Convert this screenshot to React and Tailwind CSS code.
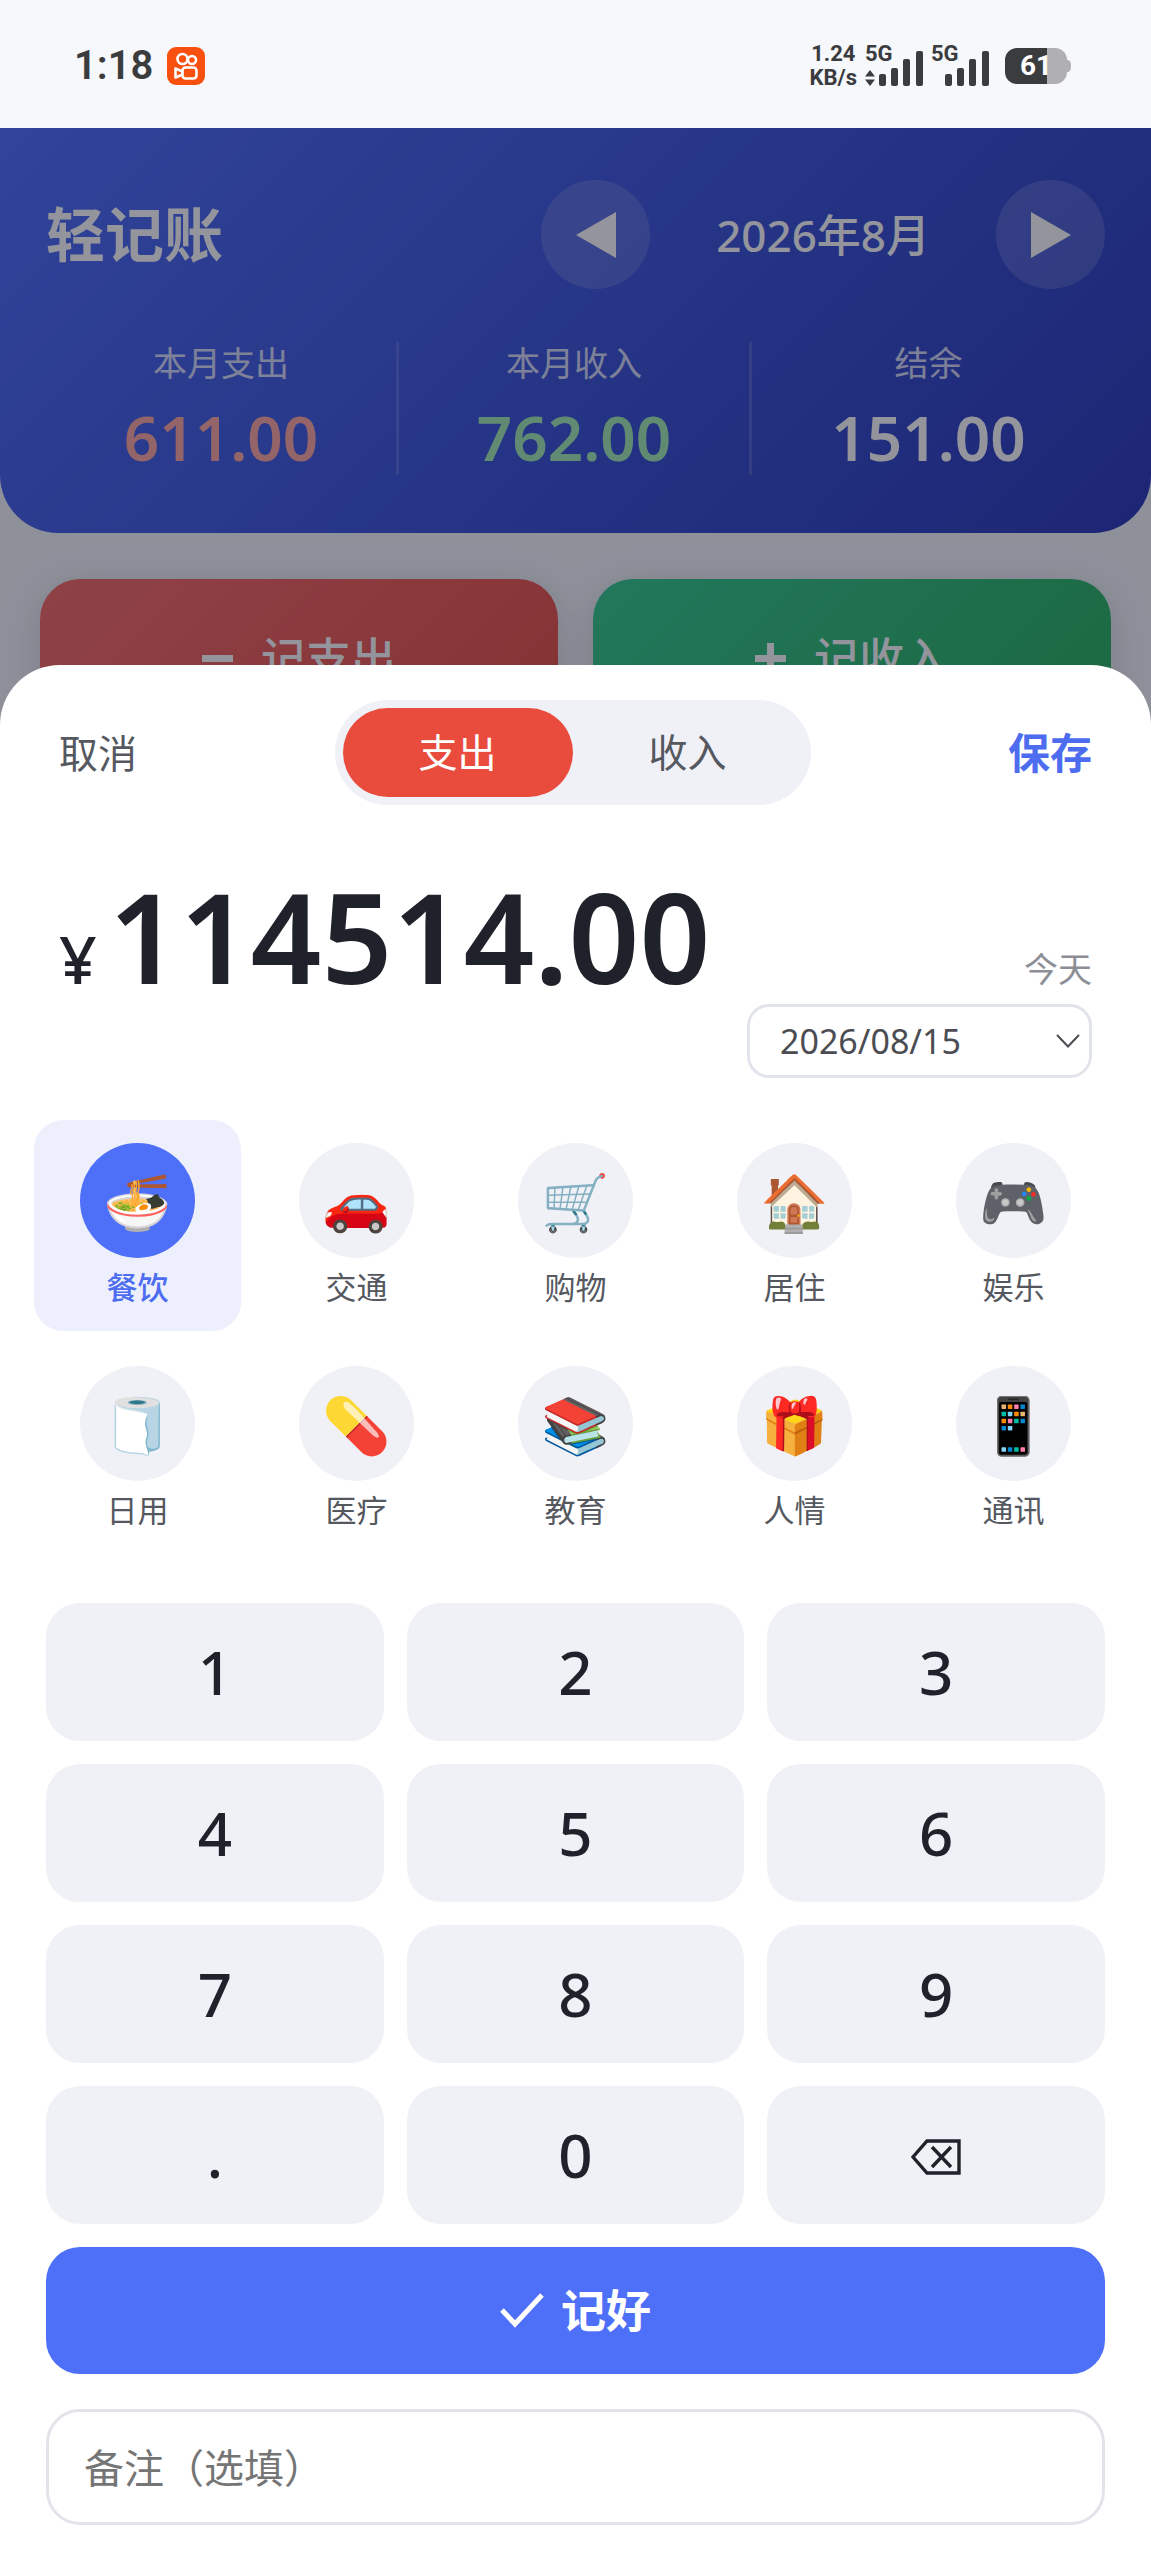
import React, { useState } from 'react';

const categories = [
  { name: '餐饮', icon: '🍜' },
  { name: '交通', icon: '🚗' },
  { name: '购物', icon: '🛒' },
  { name: '居住', icon: '🏠' },
  { name: '娱乐', icon: '🎮' },
  { name: '日用', icon: '🧻' },
  { name: '医疗', icon: '💊' },
  { name: '教育', icon: '📚' },
  { name: '人情', icon: '🎁' },
  { name: '通讯', icon: '📱' },
];

const keys = ['1', '2', '3', '4', '5', '6', '7', '8', '9', '.', '0', 'del'];

const stats = [
  { label: '本月支出', value: '611.00', color: 'text-[#ffa8a0]' },
  { label: '本月收入', value: '762.00', color: 'text-[#a4edb4]' },
  { label: '结余', value: '151.00', color: 'text-white' },
];

const SignalBars = () => (
  <svg className="h-[35px] w-[44px]" viewBox="0 0 44 35" fill="#3b3c3e">
    <rect x="0" y="23" width="7" height="12" rx="2" />
    <rect x="12" y="17" width="7" height="18" rx="2" />
    <rect x="24" y="8" width="7" height="27" rx="2" />
    <rect x="37" y="0" width="7" height="35" rx="2" />
  </svg>
);

const StatusBar = () => (
  <div className="h-32 flex items-center justify-between pl-[74px] pr-20 pt-1 font-['Roboto','Noto_Sans',sans-serif] text-[#3b3c3e]">
    <div className="flex items-center gap-[14px]">
      <span className="text-[40px] leading-none font-semibold">1:18</span>
      <svg className="w-[38px] h-[38px]" viewBox="0 0 38 38" fill="none" stroke="#fff" strokeWidth="2.6">
        <rect width="38" height="38" rx="9" fill="#f8500f" stroke="none" />
        <circle cx="15.500" cy="12" r="5" />
        <circle cx="25" cy="13" r="4" />
        <rect x="15.500" y="20.500" width="14" height="11" rx="3" />
        <path d="M15.500 24.500l-7-3v9l7-3" strokeLinejoin="round" />
      </svg>
    </div>
    <div className="flex items-center">
      <div className="flex flex-col items-center text-[22px] leading-6 font-bold mr-2">
        <span>1.24</span>
        <span>KB/s</span>
      </div>
      <div className="relative flex items-end h-10 pl-[14px] mr-[22px]">
        <span className="absolute left-0 -top-1 text-[22px] leading-6 font-bold">5G</span>
        <svg className="absolute left-0 bottom-0 w-[10px] h-4" viewBox="0 0 10 16" fill="#3b3c3e">
          <path d="M5 0l5 6.500H0zM5 16l5-6.500H0z" />
        </svg>
        <SignalBars />
      </div>
      <div className="relative flex items-end h-10 mr-4">
        <span className="absolute -left-[14px] -top-1 text-[22px] leading-6 font-bold">5G</span>
        <SignalBars />
      </div>
      <div className="relative flex items-center">
        <svg className="w-[66px] h-9" viewBox="0 0 66 36">
          <path d="M42 0h8a12 12 0 0 1 12 12c3 0 4 2 4 6s-1 6-4 6a12 12 0 0 1-12 12h-8z" fill="#b0b0b4" />
          <path d="M42 0H12A12 12 0 0 0 0 12v12a12 12 0 0 0 12 12h30z" fill="#3b3c3e" />
        </svg>
        <span className="absolute left-0 right-1 text-center text-[28px] leading-9 font-bold text-white">61</span>
      </div>
    </div>
  </div>
);

const Header = () => (
  <header className="rounded-b-[58px] bg-linear-135 from-[#4d6efb] to-[#2837b7] px-[46px] pt-[52px] pb-[58px] text-white">
    <div className="flex items-center justify-between">
      <h1 className="text-[59px] leading-none font-bold">轻记账</h1>
      <div className="flex items-center gap-[66px]">
        <button aria-label="上个月" className="w-[109px] h-[109px] rounded-full bg-white/15 flex items-center justify-center">
          <svg className="w-10 h-[46px]" viewBox="0 0 40 46" fill="currentColor">
            <path d="M40 0v46L0 23z" />
          </svg>
        </button>
        <span className="text-[44px] leading-none font-medium">2026年8月</span>
        <button aria-label="下个月" className="w-[109px] h-[109px] rounded-full bg-white/15 flex items-center justify-center">
          <svg className="w-10 h-[46px]" viewBox="0 0 40 46" fill="currentColor">
            <path d="M0 0v46l40-23z" />
          </svg>
        </button>
      </div>
    </div>
    <div className="mt-[53px] grid grid-cols-3 divide-x-3 divide-white/15">
      {stats.map((item) => (
        <div key={item.label} className="flex flex-col items-center gap-[15px]">
          <span className="text-[34px] leading-[42px] text-white/80">{item.label}</span>
          <span className={`text-[62px] leading-[76px] font-semibold ${item.color}`}>{item.value}</span>
        </div>
      ))}
    </div>
  </header>
);

const QuickActions = () => (
  <div className="grid grid-cols-2 gap-[35px] px-10 pt-[46px] text-[45px] leading-none font-medium text-white">
    <button className="h-[158px] rounded-[40px] bg-linear-135 from-[#f76b64] to-[#e84c43] shadow-[0_8px_40px_rgba(0,0,0,0.15)] flex items-center justify-center gap-7">
      <svg className="w-[31px] h-[31px]" viewBox="0 0 31 31" fill="currentColor">
        <path d="M0 12h31v7H0z" />
      </svg>
      记支出
    </button>
    <button className="h-[158px] rounded-[40px] bg-linear-135 from-[#33cb8b] to-[#25b058] shadow-[0_8px_40px_rgba(0,0,0,0.15)] flex items-center justify-center gap-7">
      <svg className="w-[31px] h-[31px]" viewBox="0 0 31 31" fill="currentColor">
        <path d="M12 0h7v12h12v7H19v12h-7V19H0v-7h12z" />
      </svg>
      记收入
    </button>
  </div>
);

const App = () => {
  const [type, setType] = useState('expense');
  const [category, setCategory] = useState('餐饮');
  const [amount, setAmount] = useState('114514.00');
  const [note, setNote] = useState('');

  const handleKey = (key) => {
    if (key === 'del') {
      setAmount(amount.slice(0, -1));
      return;
    }
    if (key === '.' && amount.includes('.')) return;
    setAmount(amount + key);
  };

  return (
    <div className="relative min-h-screen bg-[#f6f8fc] font-['Noto_Sans','Noto_Sans_CJK_SC','Noto_Color_Emoji',sans-serif]">
      <StatusBar />
      <Header />
      <QuickActions />

      {/* Overlay */}
      <div className="absolute inset-x-0 top-32 bottom-0 bg-[#0f1124]/45"></div>

      {/* Bottom sheet */}
      <div className="fixed inset-x-0 bottom-0 rounded-t-[60px] bg-white px-[46px] pt-[35px] pb-[35px] text-[#1f222a]">
        <div className="flex items-center justify-between px-[13px]">
          <button className="text-[39px] leading-none text-[#55585f]">取消</button>
          <div className="flex rounded-full bg-[#f0f1f7] p-2 text-[39px]">
            <button
              onClick={() => setType('expense')}
              className={`w-[230px] h-[89px] rounded-full ${type === 'expense' ? 'bg-[#e94b3d] text-white' : 'text-[#55585f]'}`}
            >
              支出
            </button>
            <button
              onClick={() => setType('income')}
              className={`w-[230px] h-[89px] rounded-full ${type === 'income' ? 'bg-[#27ae60] text-white' : 'text-[#55585f]'}`}
            >
              收入
            </button>
          </div>
          <button className="text-[42px] leading-none font-bold text-[#4d6cf0]">保存</button>
        </div>

        {/* Amount and date */}
        <div className="mt-[69px] flex justify-between px-[13px]">
          <div className="flex items-baseline gap-3 font-semibold">
            <span className="text-[66px] leading-none font-medium">¥</span>
            <span className="text-[124px] leading-[124px]">{amount}</span>
          </div>
          <div className="flex flex-col items-end pt-[72px]">
            <label htmlFor="date" className="text-[34px] leading-[46px] text-[#8b8e94]">今天</label>
            <div className="relative mt-3">
              <select
                id="date"
                className="appearance-none w-[345px] h-[74px] rounded-[22px] border-3 border-[#e2e4ec] bg-white pl-[30px] text-[34px] text-[#4b4d52]"
              >
                <option>2026/08/15</option>
                <option>2026/08/14</option>
              </select>
              <svg className="pointer-events-none absolute right-3 top-[30px] w-6 h-[14px]" viewBox="0 0 24 14" fill="none" stroke="#4b4d52" strokeWidth="2">
                <path d="M1 1l11 11.500L23 1" />
              </svg>
            </div>
          </div>
        </div>

        {/* Categories */}
        <div className="-mx-3 mt-[42px] grid grid-cols-5 gap-3">
          {categories.map((item) => (
            <button
              key={item.name}
              onClick={() => setCategory(item.name)}
              className={`flex flex-col items-center gap-2 rounded-[29px] py-[23px] ${item.name === category ? 'bg-[#edf0fc]' : ''}`}
            >
              <span className={`flex items-center justify-center w-[115px] h-[115px] rounded-full text-[55px] leading-none ${item.name === category ? 'bg-[#4e6ff8]' : 'bg-[#f0f1f7]'}`}>
                {item.icon}
              </span>
              <span className={`text-[31px] leading-[42px] ${item.name === category ? 'text-[#4d6cf0] font-medium' : 'text-[#55585f]'}`}>
                {item.name}
              </span>
            </button>
          ))}
        </div>

        {/* Keypad */}
        <div className="mt-[49px] grid grid-cols-3 gap-[23px] text-[60px] leading-none font-medium">
          {keys.map((key) => (
            <button
              key={key}
              onClick={() => handleKey(key)}
              aria-label={key === 'del' ? '删除' : undefined}
              className="h-[138px] rounded-[34px] bg-[#f0f1f7] flex items-center justify-center"
            >
              {key === 'del' ? (
                <svg className="w-[50px] h-10" viewBox="0 0 50 40" fill="none" stroke="currentColor" strokeWidth="3.4">
                  <path d="M16 6h32v32H16L2 22z" />
                  <path d="M21 12l19 20M40 12L21 32" />
                </svg>
              ) : key}
            </button>
          ))}
        </div>

        <button className="mt-[23px] w-full h-[127px] rounded-[34px] bg-[#4e6ff8] flex items-center justify-center gap-[17px] text-[45px] leading-none font-bold text-white">
          <svg className="w-11 h-[35px]" viewBox="0 0 44 35" fill="none" stroke="currentColor" strokeWidth="5">
            <path d="M2 17l13 14L42 2" />
          </svg>
          记好
        </button>

        <input
          type="text"
          aria-label="备注"
          value={note}
          onChange={(e) => setNote(e.target.value)}
          placeholder="备注（选填）"
          className="mt-[35px] block w-full h-[116px] rounded-[34px] border-3 border-[#e2e4ea] px-[35px] text-[40px] placeholder:text-[#757575]"
        />
      </div>
    </div>
  );
};

export default App;
